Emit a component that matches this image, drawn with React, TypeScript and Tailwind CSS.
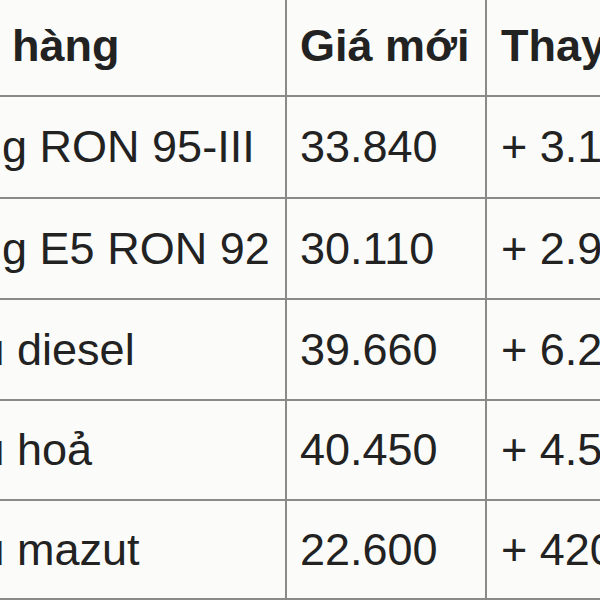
import React from "react";

const rows: [string, string, string, string][] = [
  ["Xăng RON 95-III", "33.840", "+ 3.150", "h-[102px]"],
  ["Xăng E5 RON 92", "30.110", "+ 2.930", "h-[101px]"],
  ["Dầu diesel", "39.660", "+ 6.210", "h-[101px]"],
  ["Dầu hoả", "40.450", "+ 4.550", "h-[100px]"],
  ["Dầu mazut", "22.600", "+ 420", "h-[99px]"],
];

export default function App() {
  return (
    <div
      className="w-[600px] h-[600px] overflow-hidden bg-[#fbfbf9] text-[#222222]"
      style={{ fontFamily: '"Liberation Sans", Arial, sans-serif' }}
    >
      <table className="border-collapse ml-[-94px] mt-[-5px] text-[45px] leading-[1.15] table-fixed w-[879px]">
        <colgroup>
          <col className="w-[379px]" />
          <col className="w-[200px]" />
          <col className="w-[300px]" />
        </colgroup>
        <thead>
          <tr className="h-[100px]">
            <th className="border-2 border-[#8a8a8a] pl-[14px] text-left align-middle font-bold whitespace-nowrap">
              Mặt hàng
            </th>
            <th className="border-2 border-[#8a8a8a] pl-[13px] text-left align-middle font-bold whitespace-nowrap">
              Giá mới
            </th>
            <th className="border-2 border-[#8a8a8a] pl-[14px] text-left align-middle font-bold whitespace-nowrap">
              Thay đổi
            </th>
          </tr>
        </thead>
        <tbody>
          {rows.map((r) => (
            <tr key={r[0]} className={r[3]}>
              <td className="border-2 border-[#8a8a8a] pl-[14px] align-middle whitespace-nowrap">
                {r[0]}
              </td>
              <td className="border-2 border-[#8a8a8a] pl-[13px] align-middle whitespace-nowrap">
                {r[1]}
              </td>
              <td className="border-2 border-[#8a8a8a] pl-[14px] align-middle whitespace-nowrap">
                {r[2]}
              </td>
            </tr>
          ))}
        </tbody>
      </table>
    </div>
  );
}
